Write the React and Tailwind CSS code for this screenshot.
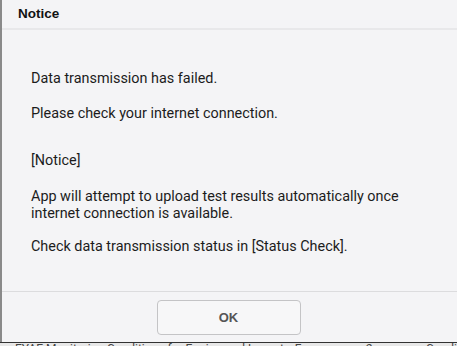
export default function App() {
  return (
    <div className="w-[457px] h-[346px] overflow-hidden bg-[#f4f4f6] flex flex-col font-['Roboto','Liberation_Sans',sans-serif]">
      <div className="h-[342px] flex flex-col border-l-2 border-[#8a8a8a]">
        <div className="h-[30px] flex items-center pl-[16px] border-b-2 border-[#e8e8ea]">
          <span className="text-[13.5px] font-bold text-[#111] font-['Liberation_Sans',sans-serif]">Notice</span>
        </div>
        <div className="flex-1 pl-[29px] pt-[40px] text-[14.4px] leading-[17px] text-[#1c1c1c]">
          <p>Data transmission has failed.</p>
          <p className="mt-[18px]">Please check your internet connection.</p>
          <p className="mt-[30px]">[Notice]</p>
          <p className="mt-[19px]">
            App will attempt to upload test results automatically once
            <br />
            internet connection is available.
          </p>
          <p className="mt-[16px]">Check data transmission status in [Status Check].</p>
        </div>
        <div className="h-[51px] border-t border-[#dcdcde] flex justify-center pt-[8px] pr-[2px]">
          <button className="w-[144px] h-[35px] rounded-[4px] border border-[#c4c4c6] bg-[#f7f7f8] text-[13px] font-bold text-[#555] font-['Liberation_Sans',sans-serif]">
            OK
          </button>
        </div>
      </div>
      <div className="h-[4px] border-t border-[#333] bg-[#e8e8e8] flex text-[12px] leading-[12px] text-[#444] whitespace-nowrap overflow-hidden">
        <span className="ml-[15px] w-[283px]">EYAE Monitoring Conditions for Engineered Layouts</span>
        <span className="w-[72px]">Fo</span>
        <span className="w-[61px]">2</span>
        <span>Condi</span>
      </div>
    </div>
  )
}
